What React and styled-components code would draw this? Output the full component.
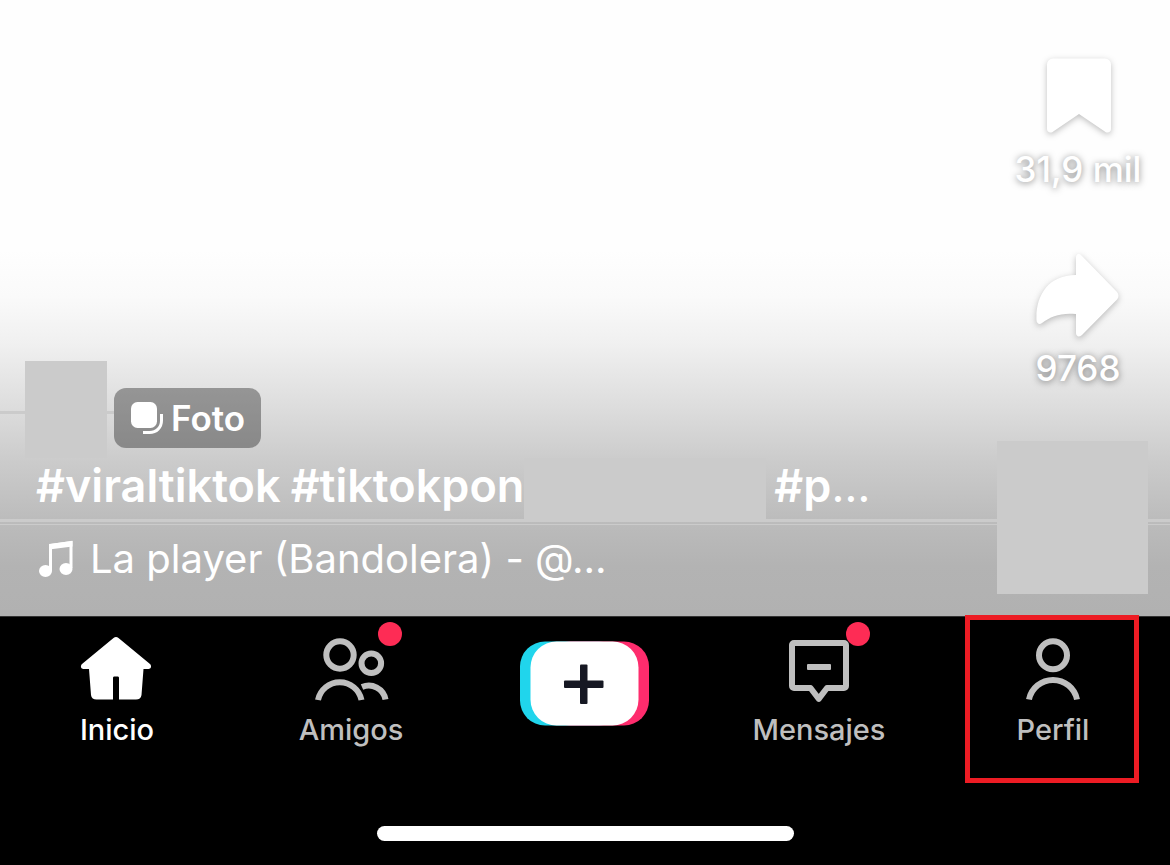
import styled, { createGlobalStyle } from 'styled-components';

const hashtags = ['#viraltiktok', '#tiktokpon'];

const App = () => {
  return (
    <>
      <GlobalStyle />
      <StPage>
        <StVideo>
          <StCaption>
            <StAuthorRow>
              <StLine $width={25} />
              <StAvatarBlock />
              <StLine $width={7} />
              <StPhotoTag>
                <PhotoIcon />
                Foto
              </StPhotoTag>
            </StAuthorRow>
            <StHashtagRow>
              <StHashtags>
                {hashtags.map((tag) => (
                  <StHashtag key={tag} href={tag}>
                    {tag}
                  </StHashtag>
                ))}
              </StHashtags>
              <StHashtagBlock />
              <StHashtag href="#p">#p</StHashtag>
              <StMore>…</StMore>
            </StHashtagRow>
            <StDivider />
            <StMusicRow href="#music">
              <MusicIcon />
              <span>La player (Bandolera) - @…</span>
            </StMusicRow>
          </StCaption>
          <StRail>
            <StAction aria-label="Guardar">
              <BookmarkIcon />
              <StCount>31,9 mil</StCount>
            </StAction>
            <StAction aria-label="Compartir">
              <ShareIcon />
              <StCount>9768</StCount>
            </StAction>
            <StDiscBlock />
          </StRail>
        </StVideo>

        <StNav>
          <StTabs>
            <StTab $active>
              <HomeIcon />
              <StTabLabel>Inicio</StTabLabel>
            </StTab>
            <StTab>
              <StIconBox>
                <FriendsIcon />
                <StDot />
              </StIconBox>
              <StTabLabel>Amigos</StTabLabel>
            </StTab>
            <StCreate aria-label="Crear">
              <CreateIcon />
            </StCreate>
            <StTab>
              <StIconBox>
                <MessagesIcon />
                <StDot />
              </StIconBox>
              <StTabLabel>Mensajes</StTabLabel>
            </StTab>
            <StTab $marked>
              <ProfileIcon />
              <StTabLabel>Perfil</StTabLabel>
            </StTab>
          </StTabs>
          <StHomeBar />
        </StNav>
      </StPage>
    </>
  );
};

export default App;

const PhotoIcon = () => (
  <svg width="34" height="34" viewBox="0 0 34 34" fill="none">
    <rect x="1" y="1" width="26" height="26" rx="6.5" fill="#fff" />
    <path
      d="M31.5 13v6.500c0 7-5 12-12 12H13"
      stroke="#fff"
      strokeWidth="3"
    />
  </svg>
);

const MusicIcon = () => (
  <svg width="36" height="38" viewBox="0 0 36 38" fill="none">
    <path
      d="M12.500 31V5.500L33 2.500V28"
      stroke="#fff"
      strokeWidth="3"
    />
    <path d="M11 4 34.500 1v5.500L11 9.500z" fill="#fff" />
    <ellipse cx="7.500" cy="31" rx="6.500" ry="6" fill="#fff" />
    <ellipse cx="28" cy="29" rx="6.500" ry="6" fill="#fff" />
  </svg>
);

const BookmarkIcon = () => (
  <StShadowSvg width="84" height="84" viewBox="0 0 84 84">
    <path
      d="M17 3.500H69a6 6 0 0 1 6 6V74c0 3-3 4.500-5.500 3L43 59 16.500 77C14 78.500 11 77 11 74V9.500a6 6 0 0 1 6-6z"
      fill="#fff"
    />
  </StShadowSvg>
);

const ShareIcon = () => (
  <StShadowSvg width="84" height="84" viewBox="0 0 84 84">
    <path
      d="M40 3.500c0-3.500 3-4.500 5.500-2L81 38c2 2.500 2 5 0 7.500L46 81c-2.500 2.500-6 1.500-6-2V60c-15-1.500-25 2-34 9-2.500 2-5.500.5-5.500-3C-.5 42 12 21 40 21z"
      fill="#fff"
    />
  </StShadowSvg>
);

const HomeIcon = () => (
  <svg width="88" height="76" viewBox="1 0 88 76" fill="currentColor">
    <path d="M41.500 8c1.500-1.300 3.500-1.300 5 0L78 34c2 2 1 5-1.500 5H71.500L69.500 65c-.3 3-2.500 4.500-5.500 4.500H47V48c0-1-.5-1.500-1.500-1.500h-3c-1 0-1.500.5-1.500 1.500V69.500H24.500c-3 0-5.200-1.500-5.500-4.500L17 39H11.500C9 39 8 36 10 34z" />
  </svg>
);

const FriendsIcon = () => (
  <svg
    width="88"
    height="76"
    viewBox="0 0 88 76"
    fill="none"
    stroke="currentColor"
    strokeWidth="6"
  >
    <circle cx="33" cy="25" r="13.700" />
    <circle cx="64.300" cy="33.300" r="9.800" />
    <path d="M11 70A22.200 22.200 0 0 1 54.500 70" />
    <path d="M55 57A17 17 0 0 1 78.500 69.500" />
  </svg>
);

const CreateIcon = () => (
  <svg width="130" height="86" viewBox="0 0 130 86">
    <rect y="0.500" width="104" height="84" rx="25" fill="#20d5ec" />
    <rect x="25" y="0.500" width="104" height="84" rx="25" fill="#fe2c6d" />
    <rect x="10.500" y="0.500" width="108" height="84" rx="26" fill="#fff" />
    <rect x="60" y="23.500" width="7.500" height="39.500" rx="1" fill="#161823" />
    <rect x="44" y="39.500" width="39.500" height="7.500" rx="1" fill="#161823" />
  </svg>
);

const MessagesIcon = () => (
  <svg
    width="88"
    height="76"
    viewBox="0 0 88 76"
    fill="none"
    stroke="currentColor"
    strokeWidth="6"
    strokeLinejoin="round"
  >
    <path d="M19 13H69a2 2 0 0 1 2 2V56a2 2 0 0 1-2 2H52L43.700 68.800 35.500 58H19a2 2 0 0 1-2-2V15a2 2 0 0 1 2-2z" />
    <rect x="32" y="34" width="24" height="6" rx="1" fill="currentColor" stroke="none" />
  </svg>
);

const ProfileIcon = () => (
  <svg
    width="88"
    height="76"
    viewBox="0 0 88 76"
    fill="none"
    stroke="currentColor"
    strokeWidth="6"
  >
    <circle cx="44" cy="25.300" r="14" />
    <path d="M20 69.500A24.500 24.500 0 0 1 68 69.500" />
  </svg>
);

const GlobalStyle = createGlobalStyle`
  * {
    box-sizing: border-box;
  }
  body {
    margin: 0;
    background-color: black;
    font-family: Inter, 'Noto Sans', sans-serif;
  }
  button {
    padding: 0;
    border: 0;
    background: none;
    font-family: inherit;
    cursor: pointer;
  }
  a {
    color: inherit;
    text-decoration: none;
  }
  svg {
    display: block;
    flex-shrink: 0;
  }
`;

const StPage = styled.div`
  min-height: 100vh;
  display: flex;
  flex-direction: column;
`;

const StVideo = styled.main`
  flex: 1;
  display: grid;
  grid-template-columns: 1fr auto;
  align-items: end;
  color: white;
  background: linear-gradient(
    to top,
    #b1b1b1 0,
    #b3b3b3 50px,
    #bcbcbc 97px,
    #cbcbcb 154px,
    #dcdcdc 206px,
    #f0f0f0 272px,
    #fafafa 320px,
    #fefefe 366px,
    #fefefe 100%
  );
`;

/* the caption runs under the rail so its divider reaches both edges */
const StCaption = styled.section`
  grid-area: 1 / 1 / 2 / 3;
  min-width: 0;
`;

const StAuthorRow = styled.div`
  display: flex;
  align-items: center;
`;

const StLine = styled.span`
  width: ${({ $width }) => $width}px;
  height: 3px;
  margin-top: 6px;
  background-color: #cbcbcb;
`;

const StAvatarBlock = styled.div`
  width: 82px;
  height: 97px;
  background-color: #cbcbcb;
`;

const StPhotoTag = styled.div`
  display: flex;
  align-items: center;
  gap: 7px;
  height: 60px;
  margin-top: 16px;
  padding: 0 16px;
  border-radius: 12px;
  background-color: rgba(0, 0, 0, 0.34);
  font-size: 35px;
  font-weight: 600;
`;

const StHashtagRow = styled.div`
  display: flex;
  align-items: center;
  height: 61px;
  padding-left: 36px;
  font-size: 45px;
  white-space: nowrap;
`;

const StHashtags = styled.div`
  display: flex;
  gap: 10px;
`;

const StHashtag = styled.a`
  padding-bottom: 6px;
  font-weight: 600;
`;

const StHashtagBlock = styled.span`
  align-self: stretch;
  width: 242px;
  margin-right: 8px;
  background-color: #cbcbcb;
`;

const StMore = styled.span`
  padding-bottom: 6px;
  font-weight: 400;
`;

const StDivider = styled.div`
  height: 6px;
  border-top: 3px solid #cbcbcb;
  border-bottom: 1px solid #cbcbcb;
`;

const StMusicRow = styled.a`
  display: flex;
  align-items: center;
  gap: 16px;
  height: 91px;
  padding: 0 0 24px 38px;
  font-size: 40px;
  white-space: nowrap;
`;

const StRail = styled.aside`
  grid-area: 1 / 2 / 2 / 3;
  width: 162px;
  margin-right: 11px;
  padding-bottom: 22px;
`;

const StAction = styled.button`
  width: 100%;
  display: flex;
  flex-direction: column;
  align-items: center;
  gap: 8px;
  margin-bottom: 63px;
  color: white;

  &:last-of-type {
    margin-bottom: 51px;
  }
`;

const StShadowSvg = styled.svg`
  overflow: visible;
  filter: drop-shadow(0 2px 3px rgba(0, 0, 0, 0.25));
`;

const StCount = styled.span`
  font-size: 35px;
  font-weight: 500;
  line-height: 44px;
  text-shadow: 0 1px 7px rgba(0, 0, 0, 0.5);
`;

const StDiscBlock = styled.div`
  width: 151px;
  height: 153px;
  background-color: #cbcbcb;
`;

const StNav = styled.nav`
  padding-bottom: 24px;
  background-color: black;
  box-shadow: inset 0 1px #333333;
`;

const StTabs = styled.div`
  display: grid;
  grid-template-columns: repeat(5, 1fr);
  justify-items: center;
  align-items: start;
`;

const StTab = styled.button`
  position: relative;
  width: 174px;
  max-width: 100%;
  height: 167px;
  padding-top: 14px;
  display: flex;
  flex-direction: column;
  align-items: center;
  gap: 6px;
  color: ${({ $active }) => ($active ? 'white' : '#bfbfbf')};

  &::after {
    content: '';
    display: ${({ $marked }) => ($marked ? 'block' : 'none')};
    position: absolute;
    inset: -1px 1px 0 -1px;
    border: 5px solid #ed1c24;
  }
`;

const StIconBox = styled.span`
  position: relative;
`;

const StDot = styled.span`
  position: absolute;
  top: -8px;
  right: -7px;
  width: 24px;
  height: 24px;
  border-radius: 50%;
  background-color: #fe2c55;
`;

const StTabLabel = styled.span`
  font-size: 29px;
  font-weight: 500;
  line-height: 36px;
`;

const StCreate = styled.button`
  padding-top: 25px;
`;

const StHomeBar = styled.div`
  width: 417px;
  max-width: 60%;
  height: 15px;
  margin: 43px auto 0;
  border-radius: 8px;
  background-color: white;
`;
